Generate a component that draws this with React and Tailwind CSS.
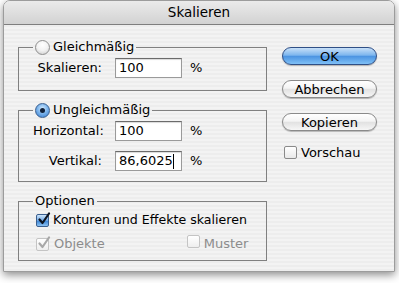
import React from 'react';

const font = { fontFamily: '"DejaVu Sans", "Liberation Sans", sans-serif' };

const Radio = ({ checked }) => (
  <span
    className={
      'inline-block w-[15px] h-[15px] rounded-full border shrink-0 relative ' +
      (checked
        ? 'border-[#3a5f8f] bg-[radial-gradient(circle_at_50%_35%,#d6ecff_0%,#7fb6ec_45%,#2f78cf_100%)]'
        : 'border-[#8e8e8e] bg-[radial-gradient(circle_at_50%_30%,#ffffff_0%,#f2f2f2_50%,#c9c9c9_100%)]')
    }
  >
    {checked && (
      <span className="absolute left-[4px] top-[4px] w-[5px] h-[5px] rounded-full bg-[#10213a]" />
    )}
  </span>
);

const Checkbox = ({ checked, disabled }) => (
  <span
    className={
      'inline-flex items-center justify-center w-[13px] h-[13px] rounded-[2px] border shrink-0 relative ' +
      (checked && !disabled
        ? 'border-[#3a5f8f] bg-[linear-gradient(#cfe6fb,#6fa8e6_50%,#3d86d6_55%,#8cc2f2)]'
        : disabled
        ? 'border-[#c4c4c4] bg-[linear-gradient(#ffffff,#eeeeee)]'
        : 'border-[#8a8a8a] bg-[linear-gradient(#ffffff,#e9e9e9)]')
    }
  >
    {checked && (
      <svg width="14" height="14" viewBox="0 0 14 14" className="absolute left-[0px] -top-[3px]">
        <path
          d="M2.5 7.5 L5.5 11 L12 1.5"
          fill="none"
          stroke={disabled ? '#a8a8a8' : '#0d1420'}
          strokeWidth="2.2"
          strokeLinecap="round"
          strokeLinejoin="round"
        />
      </svg>
    )}
  </span>
);

const Field = ({ value, caret }) => (
  <div className="w-[67px] h-[20px] bg-white border border-[#9a9a9a] border-t-[#6b6b6b] shadow-[inset_0_1px_1px_rgba(0,0,0,0.15)] flex items-center pl-[3px] text-[13px] text-black">
    {value}
    {caret && <span className="inline-block w-[1px] h-[15px] bg-black" />}
  </div>
);

const Row = ({ label, value, caret }) => (
  <div className="flex items-center h-[20px]">
    <span className="w-[69px] text-right text-[13px] text-black">{label}</span>
    <span className="ml-[13px]"><Field value={value} caret={caret} /></span>
    <span className="ml-[8px] text-[13px] text-black">%</span>
  </div>
);

const Button = ({ children, primary }) => (
  <button
    className={
      'w-[95px] h-[18px] rounded-full border text-[13px] leading-none flex items-center justify-center shadow-[0_1px_1px_rgba(0,0,0,0.25)] ' +
      (primary
        ? 'border-[#2f4f86] bg-[linear-gradient(#c8e0f8,#7db6ee_45%,#4c94e2_52%,#7fc0f6_100%)] text-black'
        : 'border-[#8a8a8a] bg-[linear-gradient(#ffffff,#f4f4f4_45%,#e2e2e2_52%,#f6f6f6_100%)] text-black')
    }
  >
    {children}
  </button>
);

export default function App() {
  return (
    <div className="w-[399px] h-[283px] bg-white overflow-hidden" style={font}>
      <div className="ml-[3px] w-[392px] h-[272px] rounded-t-[7px] shadow-[0_3px_8px_rgba(0,0,0,0.45)] border border-[#9c9c9c] overflow-hidden bg-[repeating-linear-gradient(180deg,#ededed_0px,#ededed_2px,#f3f3f3_2px,#f3f3f3_4px)]">
        <div className="h-[24px] border-b border-[#7e7e7e] bg-[linear-gradient(#ebebeb,#d2d2d2)] flex items-center justify-center text-[13.5px] text-black">
          Skalieren
        </div>

        <div className="flex pl-[14px]">
          <div className="w-[249px] flex flex-col">
            <fieldset className="mt-[14px] h-[52px] border border-[#808080] pl-[14px] pr-0 pb-0 m-0">
              <legend className="h-[16px] px-[2px] flex items-center gap-[3px] text-[13px] text-black">
                <Radio />
                <span>Gleichmäßig</span>
              </legend>
              <div className="mt-[3px]">
                <Row label="Skalieren:" value="100" />
              </div>
            </fieldset>

            <fieldset className="mt-[11px] h-[80px] border border-[#808080] pl-[14px] pr-0 pb-0 m-0">
              <legend className="h-[16px] px-[2px] flex items-center gap-[3px] text-[13px] text-black">
                <Radio checked />
                <span>Ungleichmäßig</span>
              </legend>
              <div className="mt-[3px] flex flex-col gap-[10px]">
                <Row label="Horizontal:" value="100" />
                <Row label="Vertikal:" value="86,6025" caret />
              </div>
            </fieldset>

            <fieldset className="mt-[11px] h-[68px] border border-[#808080] pl-[14px] pr-0 pb-0 m-0">
              <legend className="h-[16px] px-[2px] flex items-center text-[13px] text-black">
                Optionen
              </legend>
              <div className="mt-[4px] flex items-center h-[14px] pl-[3px] gap-[4px] text-[12.6px] text-black">
                <Checkbox checked />
                <span>Konturen und Effekte skalieren</span>
              </div>
              <div className="mt-[10px] flex items-center h-[14px] pl-[3px] text-[13px] text-[#8c8c8c]">
                <Checkbox checked disabled />
                <span className="ml-[5px]">Objekte</span>
                <span className="ml-[82px]"><Checkbox disabled /></span>
                <span className="ml-[4px]">Muster</span>
              </div>
            </fieldset>
          </div>

          <div className="ml-[15px] flex flex-col pt-[22px]">
            <Button primary>OK</Button>
            <div className="mt-[15px]"><Button>Abbrechen</Button></div>
            <div className="mt-[15px]"><Button>Kopieren</Button></div>
            <div className="mt-[12px] ml-[2px] flex items-center gap-[4px] text-[13px] text-black">
              <Checkbox />
              <span>Vorschau</span>
            </div>
          </div>
        </div>
      </div>
    </div>
  );
}
